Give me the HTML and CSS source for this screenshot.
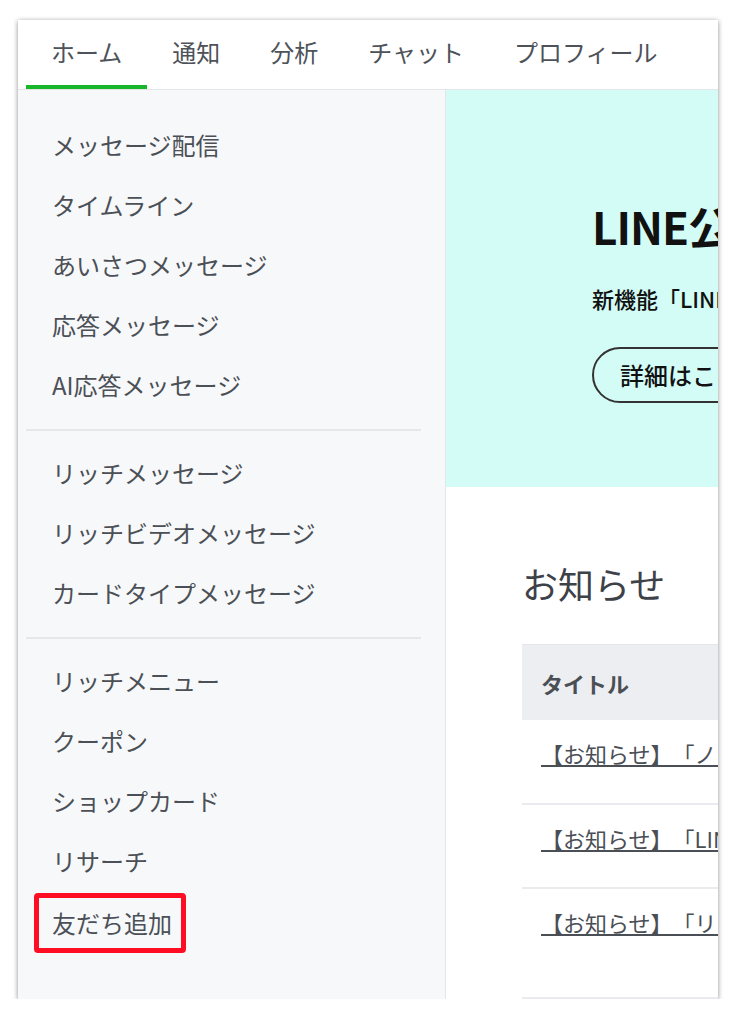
FILE: index.html
```html
<!DOCTYPE html>
<html lang="ja">
<head>
    <meta charset="UTF-8">
    <meta name="viewport" content="width=device-width, initial-scale=1.0">
    <title>LINE公式アカウント ホーム</title>
    <link rel="stylesheet" href="styles.css">
</head>
<body>
    <div class="card">
        <nav class="tabs">
            <a class="tab active">ホーム</a>
            <a class="tab">通知</a>
            <a class="tab">分析</a>
            <a class="tab">チャット</a>
            <a class="tab">プロフィール</a>
        </nav>

        <div class="layout">
            <aside class="sidebar">
                <ul class="menuGroup">
                    <li>メッセージ配信</li>
                    <li>タイムライン</li>
                    <li>あいさつメッセージ</li>
                    <li>応答メッセージ</li>
                    <li>AI応答メッセージ</li>
                </ul>
                <div class="divider"></div>
                <ul class="menuGroup">
                    <li>リッチメッセージ</li>
                    <li>リッチビデオメッセージ</li>
                    <li>カードタイプメッセージ</li>
                </ul>
                <div class="divider"></div>
                <ul class="menuGroup">
                    <li>リッチメニュー</li>
                    <li>クーポン</li>
                    <li>ショップカード</li>
                    <li>リサーチ</li>
                    <li><span class="highlight">友だち追加</span></li>
                </ul>
            </aside>

            <main class="main">
                <section class="banner">
                    <h1 class="bannerTitle">LINE公式アカウントの新機能</h1>
                    <p class="bannerText">新機能「LINEで予約」がリリースされました</p>
                    <a class="bannerButton">詳細はこちら</a>
                </section>

                <section class="notice">
                    <h2>お知らせ</h2>
                    <table class="noticeTable">
                        <tr>
                            <th>タイトル</th>
                            <th>日付</th>
                        </tr>
                        <tr>
                            <td><a>【お知らせ】「ノート」機能の提供終了について</a></td>
                            <td>2023/01/10</td>
                        </tr>
                        <tr>
                            <td><a>【お知らせ】「LINE公式アカウント」料金プラン改定のお知らせ</a></td>
                            <td>2022/12/20</td>
                        </tr>
                        <tr class="tallRow">
                            <td><a>【お知らせ】「リッチメッセージ」仕様変更について</a></td>
                            <td>2022/12/01</td>
                        </tr>
                    </table>
                </section>
            </main>
        </div>
    </div>
</body>
</html>
```

FILE: styles.css
```css
body {
    margin: 0;
    background-color: #fff;
    font-family: "Noto Sans CJK JP", "Noto Sans", sans-serif;
    color: #4a4e55;
    text-spacing-trim: space-all;
}

.card {
    margin: 20px 0 0 18px;
    width: 700px;
    height: 979px;
    background-color: #fff;
    box-shadow: 0 1px 5px rgba(0, 0, 0, 0.45);
    overflow: hidden;
    display: flex;
    flex-direction: column;
}

/* top tabs */
.tabs {
    display: flex;
    padding-left: 8px;
    height: 69px;
    border-bottom: 1px solid #e3e5e8;
    flex-shrink: 0;
}

.tab {
    padding: 0 25px;
    font-size: 24px;
    line-height: 64px;
    border-bottom: 4px solid transparent;
    color: #4e5259;
    white-space: nowrap;
}

.tab.active {
    border-bottom-color: #18b62a;
}

.layout {
    display: flex;
    flex: 1;
    min-height: 0;
}

/* left menu */
.sidebar {
    width: 427px;
    flex-shrink: 0;
    background-color: #f7f8fa;
    border-right: 1px solid #e4e6e9;
    padding-top: 25px;
}

.menuGroup {
    list-style: none;
    margin: 0;
    padding: 0;
}

.menuGroup li {
    padding-left: 34px;
    height: 60px;
    line-height: 60px;
    font-size: 24px;
    color: #4b4f56;
    white-space: nowrap;
}

.divider {
    height: 2px;
    margin: 14px 24px 12px 8px;
    background-color: #e5e7ea;
}

.highlight {
    display: inline-block;
    vertical-align: top;
    position: relative;
    top: 2px;
    margin-left: -18px;
    padding: 0 9px 0 13px;
    line-height: 50px;
    border: 5px solid #ff0d22;
    border-radius: 4px;
}

/* right side */
.main {
    flex: 1;
    min-width: 0;
    overflow: hidden;
}

.banner {
    background-color: #d3fcf6;
    padding: 110px 0 84px 146px;
    white-space: nowrap;
}

.bannerTitle {
    margin: 0;
    font-size: 44px;
    line-height: 52px;
    font-weight: bold;
    letter-spacing: -1px;
    color: #111;
}

.bannerText {
    margin: 30px 0 0;
    font-size: 22px;
    line-height: 32px;
    font-weight: 500;
    color: #111;
}

.bannerButton {
    display: inline-block;
    margin-top: 33px;
    padding: 0 40px 0 26px;
    line-height: 52px;
    border: 2px solid #333;
    border-radius: 28px;
    font-size: 24px;
    font-weight: 500;
    color: #111;
}

.notice {
    padding: 76px 0 0 76px;
}

.notice h2 {
    margin: 0 0 41px;
    font-size: 36px;
    line-height: 40px;
    font-weight: normal;
    color: #3d4148;
    white-space: nowrap;
}

.noticeTable {
    border-collapse: collapse;
    width: 900px;
}

.noticeTable th,
.noticeTable td {
    text-align: left;
    padding: 0 19px;
    font-size: 22px;
    white-space: nowrap;
}

.noticeTable th {
    height: 75px;
    background-color: #eceef1;
    border-top: 1px solid #e3e5e8;
    font-weight: bold;
    color: #4a4e55;
}

.noticeTable td {
    height: 84px;
    vertical-align: top;
    padding-top: 20px;
    box-sizing: border-box;
    line-height: 26px;
    border-bottom: 2px solid #e9ebee;
}

.noticeTable tr.tallRow td {
    height: 110px;
}

.noticeTable a {
    color: #4a4e55;
    text-decoration: underline;
}
```
